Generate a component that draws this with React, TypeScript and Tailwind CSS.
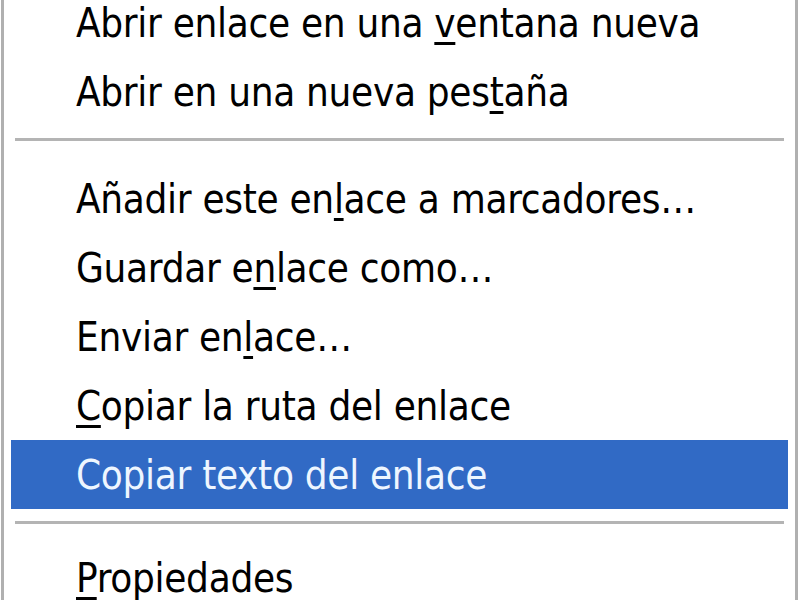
const font = { fontFamily: '"DejaVu Sans Condensed", "Liberation Sans", sans-serif' };

type Item = { label: string; u?: number; active?: boolean };

function Label({ label, u }: { label: string; u?: number }) {
  if (u === undefined) return <>{label}</>;
  return (
    <>
      {label.slice(0, u)}
      <span className="underline decoration-[3px] underline-offset-[5px]">{label[u]}</span>
      {label.slice(u + 1)}
    </>
  );
}

function Row({ item, first }: { item: Item; first?: boolean }) {
  return (
    <div
      className={`shrink-0 flex items-center pl-[65px] h-[69px] text-[40px] leading-none tracking-[-0.3px] ${
        item.active ? "bg-[#316ac5] text-[#eef6ff]" : "text-black"
      } ${first ? "-mt-[12px]" : ""}`}
    >
      <span>
        <Label label={item.label} u={item.u} />
      </span>
    </div>
  );
}

function Sep({ tall }: { tall?: boolean }) {
  return (
    <div className={`shrink-0 flex flex-col pt-[12px] px-[4px] ${tall ? "h-[38px]" : "h-[34px]"}`}>
      <div className="h-[3px] bg-[#b4b4b4]" />
    </div>
  );
}

export default function App() {
  const group1: Item[] = [
    { label: "Abrir enlace en una ventana nueva", u: 20 },
    { label: "Abrir en una nueva pestaña", u: 22 },
  ];
  const group2: Item[] = [
    { label: "Añadir este enlace a marcadores…", u: 14 },
    { label: "Guardar enlace como…", u: 9 },
    { label: "Enviar enlace…", u: 9 },
    { label: "Copiar la ruta del enlace", u: 0 },
    { label: "Copiar texto del enlace", active: true },
  ];
  return (
    <div className="w-[800px] h-[600px] overflow-hidden bg-white flex" style={font}>
      <div className="w-[1px]" />
      <div className="w-[3px] bg-[#b0b0b0]" />
      <div className="flex-1 flex flex-col px-[7px]">
        {group1.map((it, i) => (
          <Row key={it.label} item={it} first={i === 0} />
        ))}
        <Sep tall />
        {group2.map((it) => (
          <Row key={it.label} item={it} />
        ))}
        <Sep />
        <Row item={{ label: "Propiedades", u: 0 }} />
      </div>
      <div className="w-[3px] bg-[#b0b0b0]" />
      <div className="w-[2px]" />
    </div>
  );
}
